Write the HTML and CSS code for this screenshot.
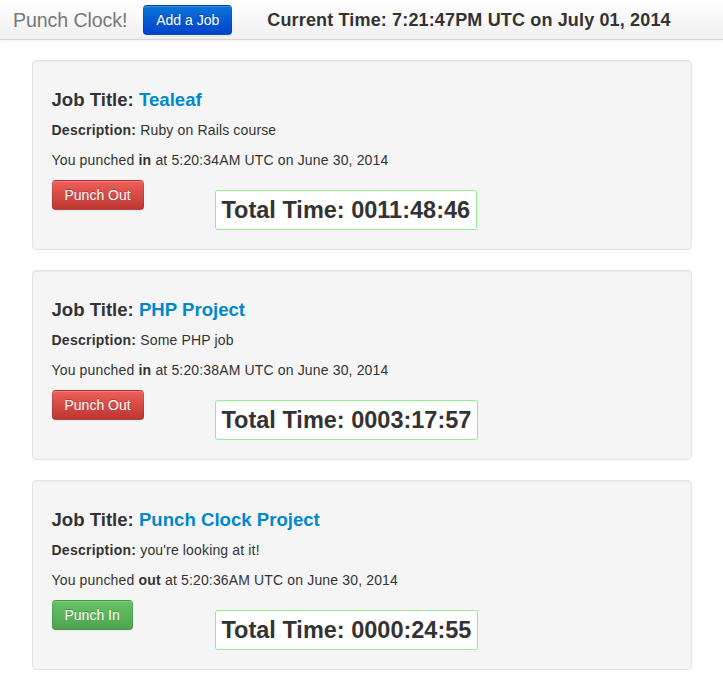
FILE: index.html
```html
<!DOCTYPE html>
<html>
<head>
<meta charset="utf-8">
<title>Punch Clock</title>
<link rel="stylesheet" href="styles.css">
</head>
<body>
<header class="navbar">
  <span class="brand">Punch Clock!</span>
  <button class="btn btn-primary">Add a Job</button>
  <span class="current-time">Current Time: 7:21:47PM UTC on July 01, 2014</span>
</header>
<main class="container">
  <section class="well">
    <h4 class="job-title">Job Title: <a href="#">Tealeaf</a></h4>
    <p><b>Description:</b> Ruby on Rails course</p>
    <p>You punched <b>in</b> at 5:20:34AM UTC on June 30, 2014</p>
    <div class="actions">
      <div class="action-btn"><button class="btn btn-danger">Punch Out</button></div>
      <div class="total">Total Time: 0011:48:46</div>
    </div>
  </section>
  <section class="well">
    <h4 class="job-title">Job Title: <a href="#">PHP Project</a></h4>
    <p><b>Description:</b> Some PHP job</p>
    <p>You punched <b>in</b> at 5:20:38AM UTC on June 30, 2014</p>
    <div class="actions">
      <div class="action-btn"><button class="btn btn-danger">Punch Out</button></div>
      <div class="total">Total Time: 0003:17:57</div>
    </div>
  </section>
  <section class="well">
    <h4 class="job-title">Job Title: <a href="#">Punch Clock Project</a></h4>
    <p><b>Description:</b> you're looking at it!</p>
    <p>You punched <b>out</b> at 5:20:36AM UTC on June 30, 2014</p>
    <div class="actions">
      <div class="action-btn"><button class="btn btn-success">Punch In</button></div>
      <div class="total">Total Time: 0000:24:55</div>
    </div>
  </section>
</main>
</body>
</html>
```
FILE: styles.css
```css
html, body {
  margin: 0;
  padding: 0;
}
body {
  font-family: "Liberation Sans", Arial, sans-serif;
  font-size: 14px;
  line-height: 20px;
  color: #333;
  background: #fff;
  overflow: hidden;
}
.navbar {
  height: 39px;
  display: flex;
  align-items: center;
  padding-left: 13px;
  background: linear-gradient(to bottom, #ffffff, #f0f0f0);
  border-bottom: 1px solid #d4d4d4;
  box-shadow: 0 1px 4px rgba(0,0,0,0.065);
}
.brand {
  font-size: 19.6px;
  color: #777;
  margin-right: 16px;
  letter-spacing: -0.1px;
}
.current-time {
  font-size: 18px;
  font-weight: bold;
  color: #333;
  margin-left: 35px;
  letter-spacing: 0.15px;
}
.btn {
  font-family: "Liberation Sans", Arial, sans-serif;
  font-size: 14px;
  line-height: 20px;
  height: 30px;
  padding: 4px 12px;
  color: #fff;
  border-radius: 4px;
  border: 1px solid rgba(0,0,0,0.1);
  border-bottom-color: rgba(0,0,0,0.25);
  text-shadow: 0 -1px 0 rgba(0,0,0,0.25);
  box-shadow: inset 0 1px 0 rgba(255,255,255,0.2), 0 1px 2px rgba(0,0,0,0.05);
  cursor: pointer;
}
.btn-primary {
  background: linear-gradient(to bottom, #0a74d8, #0044cc);
}
.btn-danger {
  background: linear-gradient(to bottom, #ee5f5b, #bd362f);
}
.btn-success {
  background: linear-gradient(to bottom, #62c462, #51a351);
}
.container {
  width: 660px;
  margin: 0 auto;
  padding-top: 20px;
}
.well {
  background: #f5f5f5;
  border: 1px solid #e3e3e3;
  border-radius: 4px;
  box-shadow: inset 0 1px 1px rgba(0,0,0,0.05);
  padding: 19px 19px 19px;
  margin-bottom: 20px;
}
.job-title {
  font-size: 18.6px;
  line-height: 20px;
  font-weight: bold;
  margin: 10px 0 10px;
}
.job-title a {
  color: #0088cc;
  text-decoration: none;
}
.well p {
  margin: 0 0 10px;
  letter-spacing: 0.15px;
}
.well p b {
  letter-spacing: 0.25px;
}
.actions {
  display: flex;
  align-items: flex-start;
}
.action-btn {
  width: 163px;
  flex: none;
}
.total {
  margin-top: 10px;
  background: #fff;
  border: 1px solid #90ee90;
  border-radius: 3px;
  padding: 0 6px;
  height: 38px;
  line-height: 38px;
  font-size: 23.5px;
  font-weight: bold;
  color: #333;
}
```
